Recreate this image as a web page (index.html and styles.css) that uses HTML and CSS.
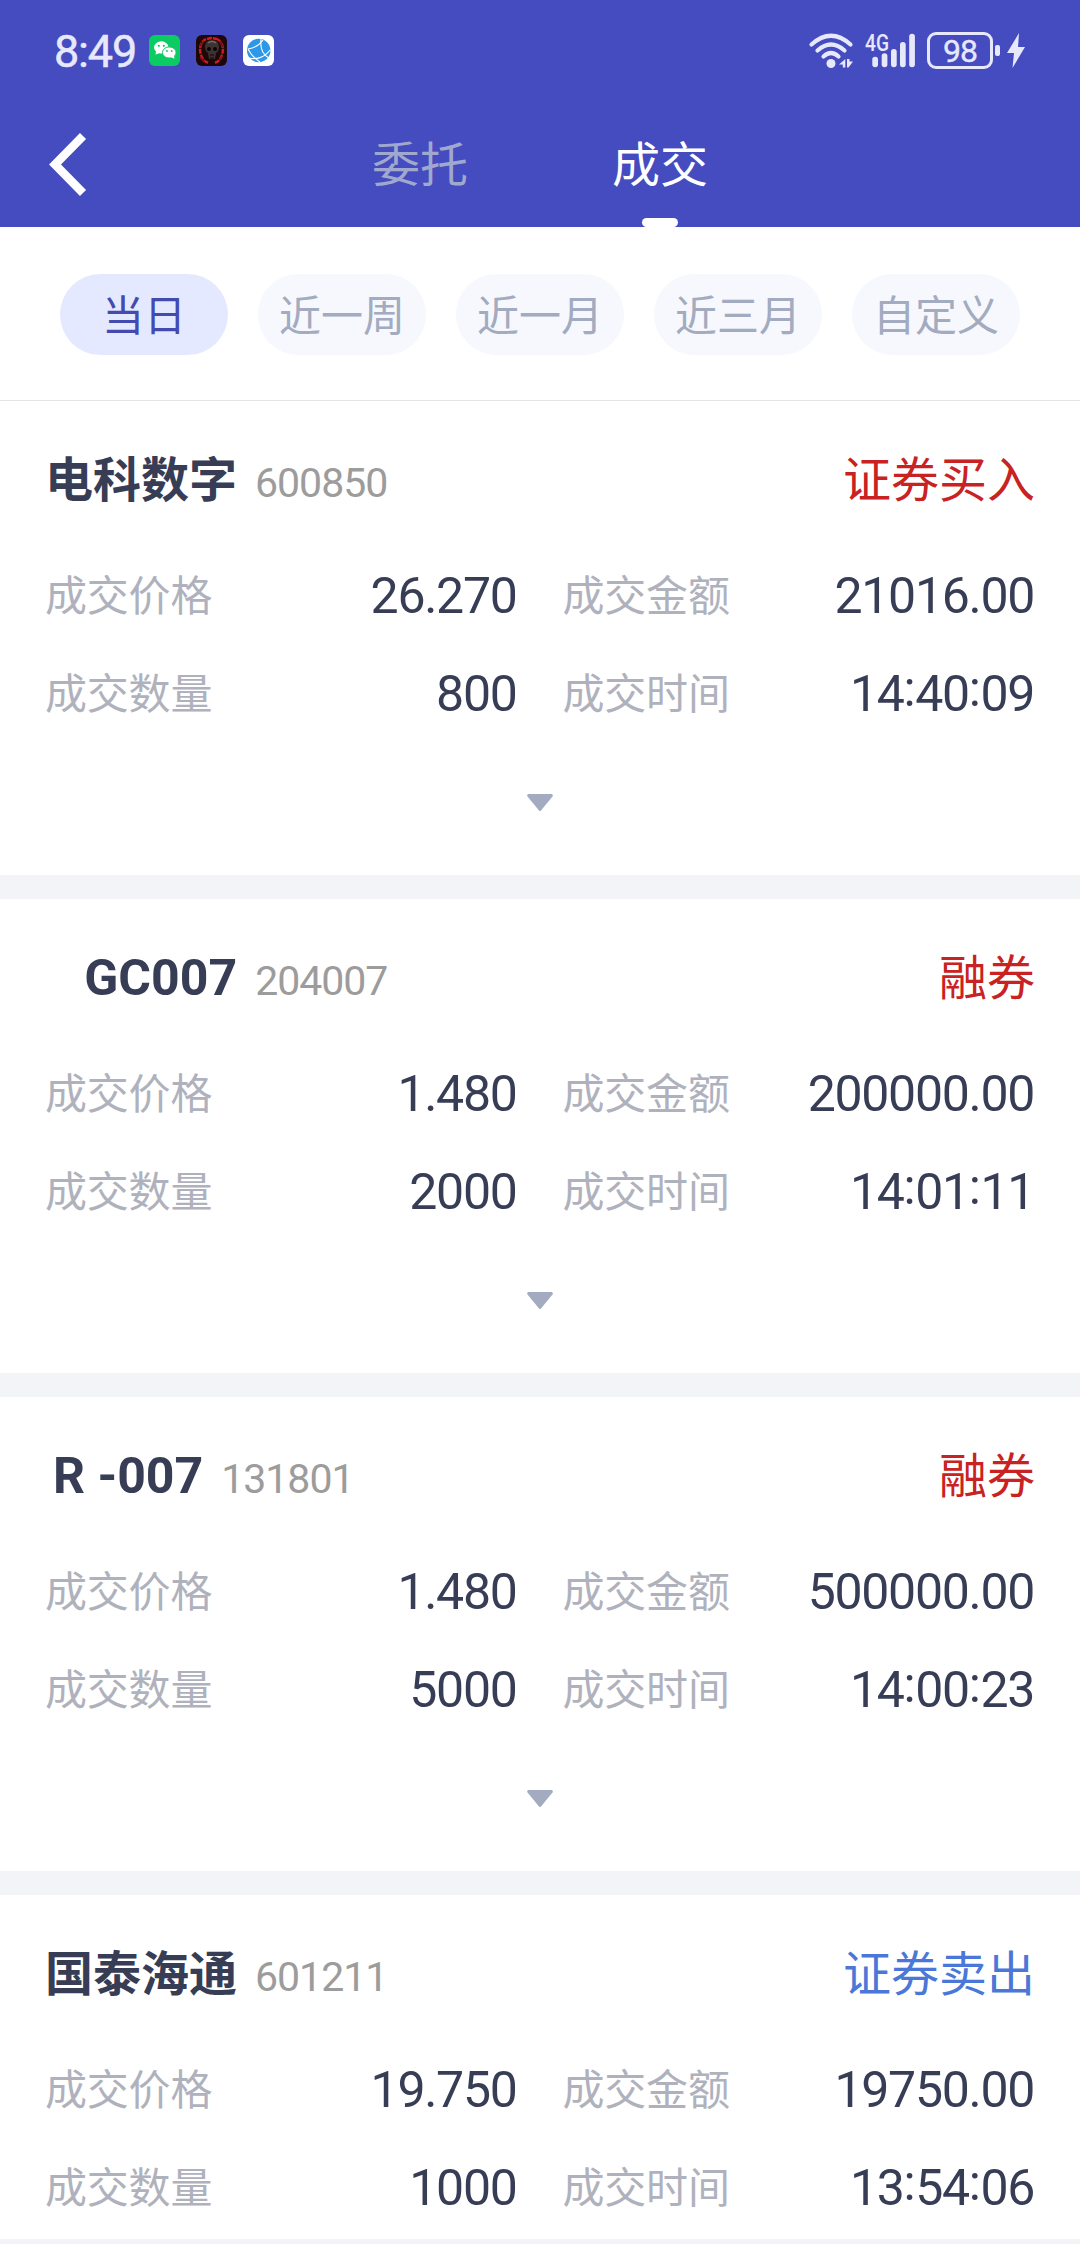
FILE: index.html
```html
<!DOCTYPE html>
<html lang="zh-CN">
<head>
    <meta charset="UTF-8">
    <meta name="viewport" content="width=device-width, initial-scale=1.0">
    <title>成交</title>
    <link rel="stylesheet" href="styles.css">
</head>
<body>
    <div class="screen">
        <header class="header">
            <div class="status-bar">
                <span class="time">8:49</span>
                <div class="app-icons">
                    <svg class="app-icon" viewBox="0 0 31 31">
                        <rect width="31" height="31" rx="6" fill="#0bcb63"/>
                        <path d="M6.500 19.500l.5-3a7.300 6 0 1 1 3.500 1.700z" fill="#fff"/>
                        <ellipse cx="20.300" cy="17.500" rx="6.800" ry="5.600" fill="#fff" stroke="#0bcb63" stroke-width="1"/>
                        <path d="M22 22.300l3.500 1.500-.5-3z" fill="#fff"/>
                        <g fill="#0bcb63">
                            <circle cx="9.800" cy="10.800" r="1.100"/>
                            <circle cx="14.800" cy="10.800" r="1.100"/>
                            <circle cx="18" cy="16" r=".9"/>
                            <circle cx="22.700" cy="16" r=".9"/>
                        </g>
                    </svg>
                    <svg class="app-icon" viewBox="0 0 31 31">
                        <rect width="31" height="31" rx="6" fill="#1d0709"/>
                        <path d="M10 4C4 7 3 14 5 20c1 4 4 7 8 8M21 4c6 3 7 10 5 16-1 4-4 7-8 8M11 4l4-1 6 1" fill="none" stroke="#d01a1c" stroke-width="2.500" stroke-dasharray="5 1"/>
                        <path d="M4 11l4-5M27 12l-3-6M4 22l4 5M27 21l-3 4" stroke="#6b1517" stroke-width="2"/>
                        <path d="M16 5c-5 0-7 3-7 7 0 3 1 5 3 6l1 6h6l1-6c2-1 3-3 3-6 0-4-2-7-7-7z" fill="#3b3231"/>
                        <path d="M12 8c2-2 6-2 8 0" fill="none" stroke="#7b6a66" stroke-width="1.500"/>
                        <circle cx="13" cy="14" r="2" fill="#0c0405"/>
                        <circle cx="19" cy="14" r="2" fill="#0c0405"/>
                        <path d="M14 20h4M14 23h4" stroke="#0c0405"/>
                    </svg>
                    <svg class="app-icon" viewBox="0 0 31 31">
                        <rect width="31" height="31" rx="6" fill="#fff"/>
                        <circle cx="15.700" cy="15.500" r="11.700" fill="#2e98e8"/>
                        <g fill="none" stroke="#fff" stroke-width="1.100">
                            <path d="M5 14c6-1 11-3 15-9M18 4c-1 9 2 16 8 19M6 23c8 2 16-1 21-8M5 14c3 6 7 10 12 13"/>
                        </g>
                    </svg>
                </div>
                <div class="signals">
                    <svg class="wifi" viewBox="0 0 44 36" fill="none" stroke="#e8e8fc" stroke-width="4.200" stroke-linecap="round">
                        <path d="M2.500 11.500Q22-6 41.500 11.500"/>
                        <path d="M8.500 17.500Q22 5.500 35.500 17.500"/>
                        <path d="M14.500 23.500Q22 16.500 29.500 23.500"/>
                        <circle cx="22" cy="30.500" r="4.500" fill="#e8e8fc" stroke="none"/>
                        <path d="M36.300 26v8.500h-2.500v-3h-3.800zM38 34.500v-8.500h2.500v2.500h3.500l-4.500 6z" fill="#e8e8fc" stroke="none"/>
                    </svg>
                    <svg class="cell" viewBox="0 0 50 36" fill="#e8e8fc">
                        <text class="cell-label" x="0" y="17.500" textLength="24" lengthAdjust="spacingAndGlyphs">4G</text>
                        <rect x="7.300" y="23.700" width="5.700" height="10.600" rx="2.800"/>
                        <rect x="16.700" y="20.300" width="5.700" height="14" rx="2.800"/>
                        <rect x="26" y="16" width="5.700" height="18.300" rx="2.800"/>
                        <rect x="35" y="9" width="5.700" height="25.300" rx="2.800"/>
                        <rect x="44.200" y="0.700" width="5.700" height="33.600" rx="2.800"/>
                    </svg>
                    <div class="battery">98</div>
                    <div class="battery-tip"></div>
                    <svg class="bolt" viewBox="0 0 18 35">
                        <path d="M12 0L0 20h7L5.500 35 18 14h-7z" fill="#e8e8fc"/>
                    </svg>
                </div>
            </div>
            <nav class="nav">
                <svg class="back" viewBox="0 0 37 63">
                    <path d="M34 3L6 31.500l28 28.500" fill="none" stroke="#fff" stroke-width="8.500"/>
                </svg>
                <div class="tabs">
                    <div class="tab">委托</div>
                    <div class="tab active">成交</div>
                </div>
            </nav>
        </header>

        <div class="filters">
            <div class="pill active">当日</div>
            <div class="pill">近一周</div>
            <div class="pill">近一月</div>
            <div class="pill">近三月</div>
            <div class="pill">自定义</div>
        </div>

        <main class="list">
            <section class="card">
                <div class="card-head">
                    <span class="name">电科数字</span>
                    <span class="code">600850</span>
                    <span class="side buy">证券买入</span>
                </div>
                <div class="fields">
                    <div class="field"><label>成交价格</label><span>26.270</span></div>
                    <div class="field"><label>成交金额</label><span>21016.00</span></div>
                    <div class="field"><label>成交数量</label><span>800</span></div>
                    <div class="field"><label>成交时间</label><span>14<i>:</i>40<i>:</i>09</span></div>
                </div>
                <svg class="more" viewBox="0 0 26 17"><path d="M1.500 0h23q2 .5 1 2.500L14 16.500q-1 1-2 0L.5 2.500q-1-2 1-2.500z"/></svg>
            </section>

            <section class="card">
                <div class="card-head">
                    <span class="name latin">&nbsp;&nbsp;&nbsp;GC007</span>
                    <span class="code">204007</span>
                    <span class="side buy">融券</span>
                </div>
                <div class="fields">
                    <div class="field"><label>成交价格</label><span>1.480</span></div>
                    <div class="field"><label>成交金额</label><span>200000.00</span></div>
                    <div class="field"><label>成交数量</label><span>2000</span></div>
                    <div class="field"><label>成交时间</label><span>14<i>:</i>01<i>:</i>11</span></div>
                </div>
                <svg class="more" viewBox="0 0 26 17"><path d="M1.500 0h23q2 .5 1 2.500L14 16.500q-1 1-2 0L.5 2.500q-1-2 1-2.500z"/></svg>
            </section>

            <section class="card">
                <div class="card-head">
                    <span class="name latin indent">R -007</span>
                    <span class="code">131801</span>
                    <span class="side buy">融券</span>
                </div>
                <div class="fields">
                    <div class="field"><label>成交价格</label><span>1.480</span></div>
                    <div class="field"><label>成交金额</label><span>500000.00</span></div>
                    <div class="field"><label>成交数量</label><span>5000</span></div>
                    <div class="field"><label>成交时间</label><span>14<i>:</i>00<i>:</i>23</span></div>
                </div>
                <svg class="more" viewBox="0 0 26 17"><path d="M1.500 0h23q2 .5 1 2.500L14 16.500q-1 1-2 0L.5 2.500q-1-2 1-2.500z"/></svg>
            </section>

            <section class="card">
                <div class="card-head">
                    <span class="name">国泰海通</span>
                    <span class="code">601211</span>
                    <span class="side sell">证券卖出</span>
                </div>
                <div class="fields">
                    <div class="field"><label>成交价格</label><span>19.750</span></div>
                    <div class="field"><label>成交金额</label><span>19750.00</span></div>
                    <div class="field"><label>成交数量</label><span>1000</span></div>
                    <div class="field"><label>成交时间</label><span>13<i>:</i>54<i>:</i>06</span></div>
                </div>
            </section>
        </main>
        <div class="bottom-strip"></div>
    </div>
</body>
</html>
```

FILE: styles.css
```css
:root {
    --primary: #444cbf;
    --status: #e8e8fc;
    --text: #383d56;
    --label: #afb2bd;
    --muted: #a2abbf;
    --gap-bg: #f3f4f7;
}
* {
    box-sizing: border-box;
}
body {
    margin: 0;
    font-family: Roboto, "Noto Sans CJK SC", sans-serif;
    color: var(--text);
    background-color: #fff;
}
.screen {
    width: 1080px;
    height: 2244px;
    display: flex;
    flex-direction: column;
    overflow: hidden;
}
svg {
    display: block;
    flex: none;
    overflow: visible;
}

/* header */
.header {
    height: 227px;
    flex: none;
    background-color: var(--primary);
}
.status-bar {
    height: 101px;
    padding: 0 55px 0 54px;
    display: flex;
    align-items: center;
    color: var(--status);
}
.time {
    width: 95px;
    padding-top: 2px;
    font-size: 45px;
    line-height: 50px;
    letter-spacing: -1.2px;
    -webkit-text-stroke: 0.5px var(--status);
}
.app-icons {
    display: flex;
    gap: 16px;
}
.app-icon {
    width: 31px;
    height: 31px;
}
.signals {
    margin-left: auto;
    display: flex;
    align-items: center;
}
.wifi {
    width: 44px;
    height: 36px;
    margin-right: 12px;
}
.cell {
    width: 50px;
    height: 36px;
    margin-right: 12px;
}
.cell-label {
    font-size: 23px;
    font-weight: 500;
}
.battery {
    width: 66px;
    height: 37px;
    border: 3px solid var(--status);
    border-radius: 9px;
    font-size: 32px;
    line-height: 32px;
    letter-spacing: -1px;
    text-align: center;
    -webkit-text-stroke: 0.4px var(--status);
}
.battery-tip {
    width: 5px;
    height: 11px;
    margin: 0 7px 0 2px;
    border-radius: 2px;
    background-color: var(--status);
}
.bolt {
    width: 18px;
    height: 35px;
}
.nav {
    height: 126px;
    padding-left: 49px;
    display: flex;
    align-items: center;
}
.back {
    width: 37px;
    height: 63px;
}
.tabs {
    height: 100%;
    margin-left: 214px;
    display: flex;
}
.tab {
    width: 240px;
    font-size: 48px;
    line-height: 129px;
    text-align: center;
    color: #a1a8cd;
}
.tab.active {
    color: #fff;
}
.tab.active::after {
    content: "";
    display: block;
    width: 36px;
    height: 9px;
    margin: -12px auto 0;
    border-radius: 5px;
    background-color: #fff;
}

/* date range */
.filters {
    height: 174px;
    flex: none;
    padding: 47px 60px 0;
    display: flex;
    gap: 30px;
    border-bottom: 1px solid #e3e4e6;
}
.pill {
    width: 168px;
    height: 81px;
    border-radius: 41px;
    font-size: 42px;
    line-height: 85px;
    text-align: center;
    color: var(--muted);
    background-color: #f6f8fd;
}
.pill.active {
    color: #434bb0;
    background-color: #e4e9ff;
}

/* deals */
.list {
    flex: 1;
    min-height: 0;
    overflow: hidden;
    display: flex;
    flex-direction: column;
    gap: 24px;
    background-color: var(--gap-bg);
}
.card {
    height: 474px;
    flex: none;
    padding: 44px 45px 0;
    background-color: #fff;
}
.card-head {
    height: 70px;
    display: flex;
    align-items: baseline;
    line-height: 71px;
}
.name {
    font-size: 48px;
    font-weight: 700;
}
.name.latin {
    padding-left: 2px;
    font-size: 50px;
}
.name.indent {
    padding-left: 8px;
}
.code {
    margin-left: 18px;
    font-size: 41px;
    letter-spacing: -1px;
    color: #9c9c9c;
}
.side {
    margin-left: auto;
    font-size: 48px;
}
.buy {
    color: #c92222;
}
.sell {
    color: #4b78d8;
}
.fields {
    margin-top: 32px;
    display: grid;
    grid-template-columns: 1fr 1fr;
    column-gap: 45px;
}
.field {
    height: 98px;
    display: flex;
    justify-content: space-between;
    align-items: center;
    line-height: 98px;
}
.field label {
    padding-top: 1px;
    font-size: 42px;
    letter-spacing: -0.2px;
    color: var(--label);
}
.field span {
    padding-right: 1px;
    font-size: 50px;
    letter-spacing: -1.3px;
}
/* colons sit centred on the digits */
.field i {
    font-style: normal;
    line-height: 1;
    letter-spacing: -0.5px;
    vertical-align: 5px;
}
.more {
    width: 26px;
    height: 17px;
    margin: 51px auto 0;
    fill: var(--muted);
}
.bottom-strip {
    height: 5px;
    flex: none;
    background-color: var(--gap-bg);
}
```
